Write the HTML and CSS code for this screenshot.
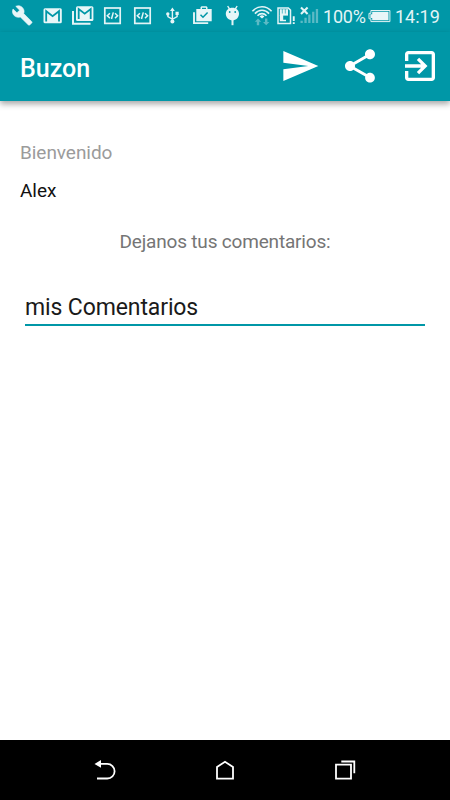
FILE: index.html
```html
<!DOCTYPE html>
<html lang="es">
<head>
  <meta charset="UTF-8">
  <title>Buzon</title>
  <link rel="stylesheet" href="styles.css">
</head>
<body>
  <div class="screen">
    <div class="status-bar">
      <svg class="notif" viewBox="0 0 30 32"><path transform="translate(4.6 4.8) scale(.89)" d="M22.7 19l-9.1-9.1c.9-2.3.4-5-1.5-6.9-2-2-5-2.4-7.4-1.3L9 6 6 9 1.6 4.7C.4 7.1.9 10.1 2.9 12.1c1.9 1.9 4.6 2.4 6.9 1.5l9.1 9.1c.4.4 1 .4 1.4 0l2.3-2.3c.5-.4.5-1.1.1-1.4z" stroke="#e8f6f8" stroke-width=".7"/></svg>
      <svg class="notif" viewBox="0 0 30 32"><rect x="6.5" y="8.3" width="18.3" height="15" rx="1.5"/><path class="cut" d="M9.2 21.5V11.2l6.4 5 6.4-5v10.3" stroke-width="1.8"/></svg>
      <svg class="notif" viewBox="0 0 30 32"><path class="line" d="M6 11v12.8h17.5" stroke-width="2"/><rect x="9" y="6.2" width="17.4" height="14.8" rx="1.5"/><path class="cut" d="M11.7 19V9l6 4.7 6-4.7v10" stroke-width="1.8"/></svg>
      <svg class="notif" viewBox="0 0 30 32"><rect class="line" x="7.8" y="8" width="15.4" height="15.4" stroke-width="1.7"/><path class="line" d="M12.9 13.3l-2.6 2.4 2.6 2.4M18 13.3l2.6 2.4-2.6 2.4M16.3 12.4l-1.8 6.6" stroke-width="1.5"/></svg>
      <svg class="notif" viewBox="0 0 30 32"><rect class="line" x="7.8" y="8" width="15.4" height="15.4" stroke-width="1.7"/><path class="line" d="M12.9 13.3l-2.6 2.4 2.6 2.4M18 13.3l2.6 2.4-2.6 2.4M16.3 12.4l-1.8 6.6" stroke-width="1.5"/></svg>
      <svg class="notif" viewBox="0 0 30 32"><path d="M15.4 7.5l2.4 3.5H13zM18.5 11.8h3.2V15h-3.2z"/><circle cx="10.8" cy="14" r="1.7"/><circle cx="15.4" cy="21.5" r="2"/><path class="line" d="M15.4 10v12M10.9 14.5v2.2l4.5 2.6 4.7-2.6V14" stroke-width="1.4"/></svg>
      <svg class="notif" viewBox="0 0 30 32"><path class="line" d="M7 12.3v10.8h14.2" stroke-width="1.9"/><path d="M9.3 9h4.2V7.2l1-1h5l1 1V9h4.2v12.2H9.3zM15 9h4V7.8h-4z" fill-rule="evenodd"/><path class="cut" d="M13.5 14.8l2.5 2.5 4.6-4.7" stroke-width="1.5"/></svg>
      <svg class="notif" viewBox="0 0 30 32"><path d="M8.8 13.8c0-2.2 1.1-4 2.7-5L10.1 6.2l1.1-.5 1.7 2.5c1.7-.6 3.4-.6 5 0l1.7-2.5 1.1.5-1.4 2.6c1.6 1 2.7 2.8 2.7 5 0 3.7-2.9 6.6-6.5 6.6s-6.7-2.9-6.7-6.6z"/><path class="line" d="M15.5 20v5.2" stroke-width="2"/><circle class="hole" cx="12.7" cy="12" r=".9"/><circle class="hole" cx="18.2" cy="12" r=".9"/></svg>
      <svg class="wifi" viewBox="0 0 28 32"><path class="line" d="M5.4 11.3c5.3-6 13.9-6 19.2 0M7.9 13.6c4-4.5 10.2-4.5 14.2 0M10.5 15.8c2.6-2.9 6.4-2.9 9 0" stroke-width="1.6"/><path d="M12.6 16.4c1.4-1.4 3.4-1.4 4.8 0L15 18.6z"/><path class="dim" d="M11 18.6l3.2 3.2h-2v3.4H9.8v-3.4h-2zM19.2 25.2l3.2-3.2h-2v-3.4H18V22h-2z"/></svg>
      <svg class="sim" viewBox="0 0 22 32"><path class="line" d="M3 7.9h10.3l2.2 2.2v13.3H3z" stroke-width="1.5"/><path d="M4.8 9.2H13v6.4H4.8z"/><path class="cut" d="M7.3 9v4.5M10.3 9v4.5" stroke-width=".6"/><path d="M4.8 15h3.4v6.2H4.8zM8 19.8h3v1.4H8z"/><path d="M17.8 16.3h1.9v4.8h-1.9zM17.8 22.2h1.9v1.8h-1.9z"/></svg>
      <svg class="signal" viewBox="0 0 24 32"><path class="dim" d="M3.5 20.8h2.3V23H3.5zM7.4 17.8h2.3V23H7.4zM11.2 14.4h2.3V23h-2.3zM15.1 11.7h2.3V23h-2.3zM18.8 9h2.3v14h-2.3z"/><path class="line" d="M4 7.5l6.6 6.6M10.6 7.5L4 14.1" stroke-width="2.1"/></svg>
      <span class="percent">100%</span>
      <svg class="battery" viewBox="0 0 24 32"><path class="line" d="M3.9 10.5h19v11.1h-19v-2.8H2v-5.5h1.9z" stroke-width="1"/><path d="M5.2 11.8h16.3v8.5H5.2v-2.4H3.4v-3.7h1.8z"/></svg>
      <span class="clock">14:19</span>
    </div>

    <div class="app-bar">
      <h1>Buzon</h1>
      <svg class="action" viewBox="0 0 24 24"><path d="M2.01 21L23 12 2.01 3 2 10l15 2-15 2z"/></svg>
      <svg class="action" viewBox="0 0 24 24"><path d="M18 16.08c-.76 0-1.44.3-1.96.77L8.91 12.7c.05-.23.09-.46.09-.7s-.04-.47-.09-.7l7.05-4.11c.54.5 1.25.81 2.04.81 1.66 0 3-1.34 3-3s-1.34-3-3-3-3 1.34-3 3c0 .24.04.47.09.7L8.04 9.81C7.5 9.31 6.79 9 6 9c-1.66 0-3 1.34-3 3s1.34 3 3 3c.79 0 1.5-.31 2.04-.81l7.12 4.16c-.05.21-.08.43-.08.65 0 1.61 1.31 2.92 2.92 2.92s2.92-1.31 2.92-2.92-1.31-2.92-2.92-2.92z"/></svg>
      <svg class="action" viewBox="0 0 24 24"><path d="M10.09 15.59L11.5 17l5-5-5-5-1.41 1.41L12.67 11H3v2h9.67l-2.58 2.59zM19 3H5c-1.11 0-2 .9-2 2v4h2V5h14v14H5v-4H3v4c0 1.1.89 2 2 2h14c1.1 0 2-.9 2-2V5c0-1.1-.9-2-2-2z"/></svg>
    </div>

    <div class="content">
      <p class="welcome">Bienvenido</p>
      <p class="name">Alex</p>
      <p class="label">Dejanos tus comentarios:</p>
      <div class="comment">mis Comentarios</div>
    </div>

    <div class="nav-bar">
      <svg viewBox="0 0 30 30"><path d="M7 8.9h10.3a7.3 7.3 0 0 1 0 14.6H7"/><path class="solid" d="M4.5 8.9L11 5.1v7.6z"/></svg>
      <svg viewBox="0 0 30 30"><path d="M7 23.6V12l8-5.2 8 5.2v11.6z"/></svg>
      <svg viewBox="0 0 30 30"><path d="M6 9.6h15v14H6zM11.3 6.5h13v11.8"/></svg>
    </div>
  </div>
</body>
</html>
```
FILE: styles.css
```css
body {
  margin: 0;
  font-family: Roboto, sans-serif;
  background: #fff;
}

.screen {
  display: flex;
  flex-direction: column;
  height: 800px;
}

.status-bar {
  display: flex;
  align-items: center;
  height: 32px;
  padding-left: 7px;
  background: #0097a7;
  color: #e3f4f6;
  font-size: 18px;
  white-space: nowrap;
}

.status-bar svg {
  flex: none;
  height: 32px;
  fill: #e8f6f8;
}

.status-bar .line { fill: none; stroke: #e3f4f6; }
.status-bar .cut { fill: none; stroke: #0097a7; }
.status-bar .hole { fill: #0097a7; }
.status-bar .dim { fill: #5bbac5; }

.notif { width: 30px; }
.wifi { width: 28px; }
.sim { width: 22px; }
.signal { width: 24px; }
.battery { width: 24px; }

.percent {
  width: 46px;
  padding-left: 2px;
  box-sizing: border-box;
  letter-spacing: -0.2px;
}

.clock {
  padding-left: 4px;
}

.app-bar {
  display: flex;
  align-items: center;
  gap: 20px;
  height: 69px;
  padding: 0 10px 0 20px;
  background: #0097a7;
  box-shadow: 0 3px 6px rgba(0,0,0,0.35);
}

h1 {
  flex: 1;
  margin: 0;
  padding-top: 3px;
  font-size: 25px;
  font-weight: 500;
  color: #fff;
}

.action {
  width: 40px;
  height: 40px;
  margin-bottom: 1px;
  fill: #fff;
}

.content {
  flex: 1;
  padding: 41px 20px 0;
}

.content p {
  margin: 0;
  font-size: 19px;
  line-height: 22px;
  letter-spacing: -0.05px;
}

.content .welcome { color: #9b9b9b; }

.content .name {
  margin-top: 16px;
  color: #111;
}

.content .label {
  margin-top: 29px;
  text-align: center;
  letter-spacing: -0.18px;
  color: #757575;
}

.comment {
  height: 30px;
  margin: 41px 5px 0;
  border-bottom: 2px solid #0097a7;
  font-size: 23px;
  line-height: 28px;
  letter-spacing: -0.12px;
  color: #1a1a1a;
}

.nav-bar {
  display: flex;
  justify-content: center;
  align-items: center;
  gap: 90px;
  height: 60px;
  background: #000;
}

.nav-bar svg {
  width: 30px;
  height: 30px;
  fill: none;
  stroke: #fff;
  stroke-width: 1.8;
}

.nav-bar .solid {
  fill: #fff;
  stroke: none;
}
```
